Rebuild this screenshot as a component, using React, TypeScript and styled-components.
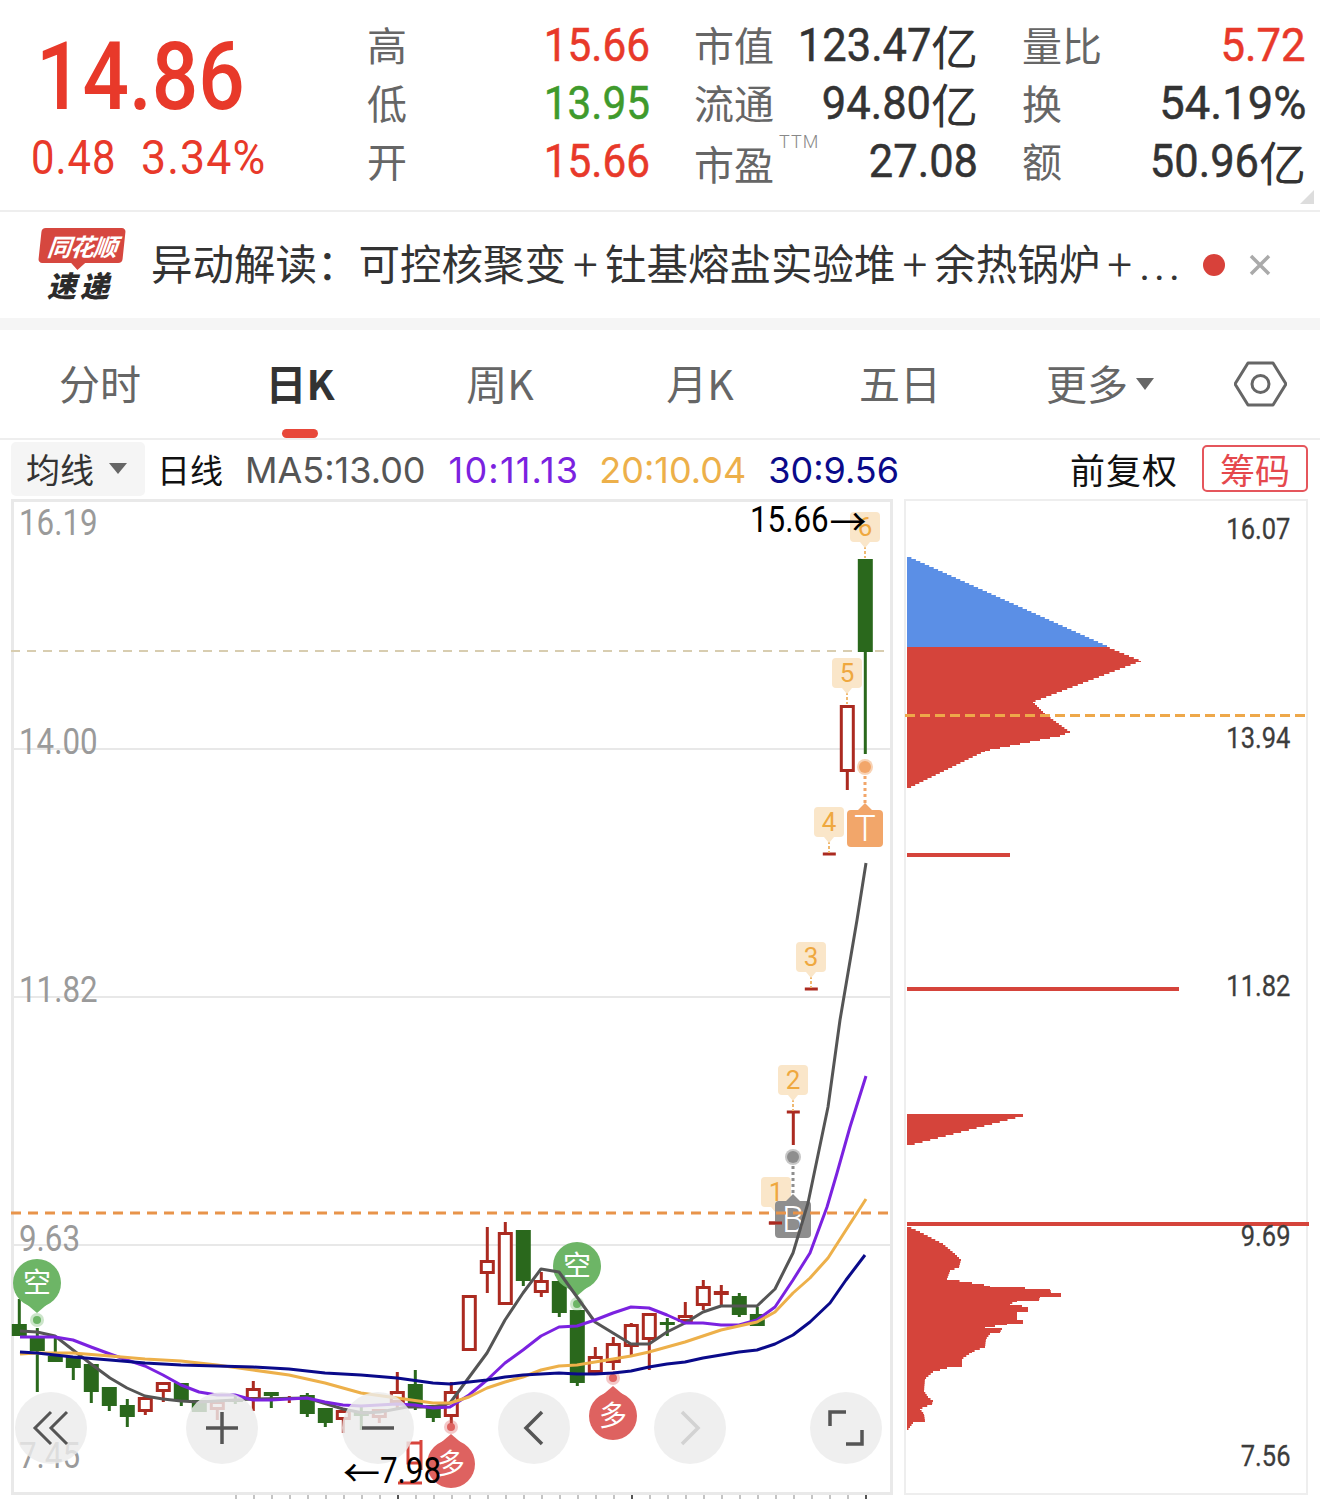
import styled, { createGlobalStyle } from "styled-components";

const NUM = `Roboto, "Noto Sans CJK SC", sans-serif`;
const CJK = `"Noto Sans CJK SC", Roboto, sans-serif`;
const MA_FONT = `Inter, Roboto, sans-serif`;

const RED = "#e8392a";
const GREEN = "#3f9a2c";
const CANDLE_RED = "#ab2a20";
const CANDLE_GREEN = "#2a681c";
const CHIP_RED = "#d5443b";

type StatItem = { label: string; value: string; scale: number; unit?: string; color?: string; sup?: string };

const stats: StatItem[] = [
  { label: "高", value: "15.66", scale: 0.9, color: RED },
  { label: "市值", value: "123.47", scale: 0.925, unit: "亿" },
  { label: "量比", value: "5.72", scale: 0.93, color: RED },
  { label: "低", value: "13.95", scale: 0.9, color: GREEN },
  { label: "流通", value: "94.80", scale: 0.925, unit: "亿" },
  { label: "换", value: "54.19%", scale: 0.965 },
  { label: "开", value: "15.66", scale: 0.9, color: RED },
  { label: "市盈", value: "27.08", scale: 0.925, sup: "TTM" },
  { label: "额", value: "50.96", scale: 0.925, unit: "亿" },
];

const tabs = ["分时", "日K", "周K", "月K", "五日"];

// hi, lo, top, bottom, up
const candles: number[][] = [
  [1299, 1336, 1324, 1336, 0],
  [1328, 1392, 1338, 1351, 0],
  [1337, 1362, 1356, 1362, 0],
  [1356, 1380, 1356, 1368, 0],
  [1364, 1403, 1364, 1392, 0],
  [1387, 1411, 1387, 1406, 0],
  [1399, 1427, 1405, 1417, 0],
  [1397, 1415, 1397, 1412, 1],
  [1382, 1402, 1382, 1392, 1],
  [1383, 1406, 1383, 1400, 0],
  [1400, 1412, 1400, 1412, 0],
  [1401, 1420, 1401, 1410, 1],
  [1395, 1404, 1399, 1402, 0],
  [1381, 1411, 1388, 1400, 1],
  [1392, 1408, 1392, 1396, 0],
  [1396, 1403, 1396, 1399, 1],
  [1393, 1417, 1395, 1414, 0],
  [1408, 1427, 1408, 1423, 0],
  [1410, 1433, 1410, 1420, 1],
  [1407, 1430, 1411, 1416, 0],
  [1409, 1423, 1409, 1418, 1],
  [1372, 1408, 1391, 1403, 1],
  [1370, 1410, 1384, 1408, 0],
  [1405, 1422, 1405, 1418, 0],
  [1382, 1427, 1391, 1417, 1],
  [1295, 1351, 1295, 1351, 1],
  [1227, 1293, 1260, 1274, 1],
  [1222, 1305, 1232, 1305, 1],
  [1230, 1286, 1230, 1281, 0],
  [1272, 1297, 1280, 1293, 1],
  [1278, 1317, 1281, 1313, 0],
  [1310, 1386, 1310, 1383, 0],
  [1347, 1373, 1356, 1373, 1],
  [1337, 1370, 1343, 1363, 1],
  [1323, 1356, 1324, 1347, 1],
  [1313, 1370, 1313, 1340, 1],
  [1318, 1336, 1322, 1325, 0],
  [1302, 1322, 1315, 1322, 1],
  [1280, 1310, 1286, 1306, 1],
  [1285, 1305, 1291, 1295, 1],
  [1293, 1317, 1296, 1315, 0],
  [1307, 1326, 1314, 1326, 0],
  [1223, 1223, 1223, 1223, 1],
  [1112, 1145, 1112, 1112, 1],
  [989, 989, 989, 989, 1],
  [854, 854, 854, 854, 1],
  [705, 790, 705, 772, 1],
  [559, 754, 559, 652, 0],
];

const ma5 =
  "20,1331 37,1332 55,1336 73,1350 91,1364 110,1378 127,1388 145,1396 163,1399 181,1401 199,1402 217,1401 253,1399 307,1398 343,1409 363,1413 380,1412 407,1407 433,1407 450,1403 487,1353 505,1320 523,1293 541,1269 559,1272 577,1297 595,1322 613,1333 631,1344 649,1344 667,1332 685,1323 703,1312 721,1306 739,1306 757,1306 775,1289 793,1253 808,1203 828,1107 840,1020 857,920 866,863";
const ma10 =
  "20,1337 37,1337 55,1337 73,1340 91,1347 110,1354 127,1360 145,1366 163,1375 181,1385 199,1392 217,1395 235,1395 253,1400 271,1400 289,1399 307,1398 325,1402 343,1405 361,1406 379,1405 397,1404 415,1405 433,1408 450,1407 469,1395 487,1380 505,1363 523,1350 541,1336 559,1327 577,1326 595,1320 613,1313 631,1307 649,1308 667,1315 685,1323 703,1323 721,1325 739,1325 757,1320 775,1307 793,1280 810,1253 827,1207 837,1173 850,1127 866,1076";
const ma20 =
  "20,1354 37,1353 73,1353 110,1356 145,1359 181,1361 217,1365 253,1370 289,1375 325,1383 361,1393 397,1398 433,1403 450,1403 469,1397 487,1388 505,1382 523,1377 541,1370 559,1366 577,1365 595,1362 613,1359 631,1356 649,1352 667,1347 685,1342 703,1336 721,1330 739,1326 757,1322 775,1312 793,1293 810,1278 828,1258 846,1230 866,1199";
const ma30 =
  "20,1352 37,1353 73,1357 110,1360 145,1363 181,1365 217,1366 253,1367 289,1369 325,1373 361,1375 397,1378 433,1383 450,1384 469,1382 487,1380 505,1377 523,1375 541,1374 559,1373 577,1374 595,1374 613,1373 631,1371 649,1367 667,1364 685,1362 703,1358 721,1355 739,1352 757,1350 775,1344 793,1335 810,1322 830,1303 846,1280 865,1255";

const grids = [749, 997, 1245];
const axis = [
  { top: -3, text: "16.19" },
  { top: 216, text: "14.00" },
  { top: 464, text: "11.82" },
  { top: 713, text: "9.63" },
  { top: 930, text: "7.45" },
];
const chipAxis = [
  { top: 7, text: "16.07" },
  { top: 216, text: "13.94" },
  { top: 464, text: "11.82" },
  { top: 714, text: "9.69" },
  { top: 934, text: "7.56" },
];

const tags = [
  { n: 1, x: 776, y: 1177 },
  { n: 2, x: 793, y: 1065 },
  { n: 3, x: 811, y: 942 },
  { n: 4, x: 829, y: 807 },
  { n: 5, x: 847, y: 658 },
  { n: 6, x: 865, y: 512 },
];

const lowerChip: [number, number][] = [
  [907, 1227], [920, 1233], [943, 1245], [955, 1255], [961, 1261], [959, 1268], [950, 1272], [947, 1280],
  [972, 1284], [990, 1287], [1025, 1289], [1050, 1290], [1051, 1293], [1061, 1295], [1061, 1297], [1040, 1298],
  [1039, 1301], [1017, 1302], [1010, 1305], [1028, 1308], [1028, 1312], [1017, 1313], [1017, 1320], [1023, 1321],
  [1023, 1324], [1007, 1325], [995, 1327], [985, 1328], [1002, 1330], [1000, 1333], [990, 1335], [986, 1340],
  [985, 1348], [972, 1353], [962, 1360], [962, 1367], [947, 1369], [933, 1373], [925, 1380], [924, 1392],
  [928, 1398], [933, 1402], [932, 1405], [920, 1410], [924, 1415], [925, 1422], [913, 1424], [907, 1432],
];

// the chip chart is drawn in thin rows, so a profile becomes a stepped path
function stairPath(points: [number, number][], left = 907) {
  let d = `M${left} ${points[0][1]}`;
  for (let i = 0; i < points.length - 1; i++) {
    const [x0, y0] = points[i];
    const [x1, y1] = points[i + 1];
    for (let y = y0; y < y1; y += 2) {
      const x = x0 + ((x1 - x0) * Math.min(y + 2 - y0, y1 - y0)) / (y1 - y0);
      d += `H${x.toFixed(1)}V${Math.min(y + 2, y1)}`;
    }
  }
  return `${d}H${left}z`;
}

const GlobalStyle = createGlobalStyle`
  html, body {
    margin: 0;
    padding: 0;
    background: #fff;
    font-family: ${CJK};
  }
`;

const Page = styled.div`
  width: 1320px;
  height: 1499px;
  overflow: hidden;
  background: #fff;
`;

const Header = styled.header`
  position: relative;
  display: flex;
  height: 210px;
  padding-top: 15px;
  box-sizing: border-box;
`;

// digits of the reference are condensed, no installed family is that narrow
const Narrow = styled.span<{ $scale?: number; $origin?: string }>`
  display: inline-block;
  white-space: nowrap;
  font-family: ${NUM};
  transform: scaleX(${(p) => p.$scale ?? 0.87});
  transform-origin: ${(p) => p.$origin ?? "left"} center;
`;

const PriceBlock = styled.div`
  width: 367px;
  flex: none;
  color: ${RED};
`;

const BigPrice = styled.div`
  margin: 6px 0 0 36px;
  font-size: 94px;
  line-height: 94px;
  font-weight: 500;
`;

const ChangeRow = styled.div`
  display: flex;
  gap: 12px;
  margin: 8px 0 0 31px;
  font-size: 48px;
  line-height: 52px;
  font-weight: 400;
  letter-spacing: 1.2px;
`;

const StatGrid = styled.div`
  display: grid;
  grid-template-columns: 283px 284px 284px;
  grid-auto-rows: 58px;
  column-gap: 44px;
`;

const Stat = styled.div`
  display: flex;
  align-items: center;
  justify-content: space-between;
  white-space: nowrap;
`;

const StatLabel = styled.span<{ $low?: boolean }>`
  position: relative;
  margin-top: ${(p) => (p.$low ? 6 : 0)}px;
  font-size: 40px;
  color: #666;
`;

const Sup = styled.sup`
  position: absolute;
  left: 85px;
  top: -2px;
  font-size: 18px;
  line-height: 20px;
  letter-spacing: 1px;
  color: #888;
  font-family: ${NUM};
  font-weight: 300;
`;

const StatValue = styled.span<{ $color?: string }>`
  display: flex;
  align-items: center;
  margin-top: 2px;
  font-size: 47px;
  line-height: 52px;
  font-weight: 400;
  color: ${(p) => p.$color || "#333"};
  -webkit-text-stroke: 0.5px currentColor;
`;

const Unit = styled.span`
  font-family: ${CJK};
  font-size: 47px;
  line-height: 52px;
  -webkit-text-stroke: 0;
`;

const Corner = styled.i`
  position: absolute;
  right: 6px;
  bottom: 6px;
  border-style: solid;
  border-width: 0 0 14px 14px;
  border-color: transparent transparent #ddd transparent;
`;

const Notice = styled.section`
  display: flex;
  align-items: center;
  height: 108px;
  box-sizing: border-box;
  border-top: 2px solid #eee;
  padding: 0 49px 0 38px;
`;

const Logo = styled.div`
  width: 87px;
  flex: none;
  margin-right: 26px;
  margin-top: -2px;
  text-align: center;
`;

const LogoBadge = styled.div`
  position: relative;
  height: 35px;
  width: 84px;
  margin-left: 2px;
  background: #d6473f;
  border-radius: 4px;
  transform: skewX(-6deg);
  color: #fff;
  font-size: 24px;
  line-height: 35px;
  font-weight: 700;
  font-style: italic;
  letter-spacing: -1px;
  white-space: nowrap;

  &::after {
    content: "";
    position: absolute;
    left: 33px;
    bottom: -7px;
    border-style: solid;
    border-width: 7px 7px 0 7px;
    border-color: #d6473f transparent transparent transparent;
  }
`;

const LogoSub = styled.div`
  margin: 5px 0 0 -3px;
  font-size: 29px;
  line-height: 32px;
  font-weight: 900;
  font-style: italic;
  color: #2b2b2b;
  letter-spacing: 4px;
  white-space: nowrap;
`;

const NoticeText = styled.div`
  flex: 1;
  min-width: 0;
  font-size: 41.5px;
  line-height: 56px;
  margin-top: -2px;
  color: #333;
  white-space: nowrap;
`;

const Plus = styled.span`
  font-family: ${NUM};
  font-size: 44px;
  font-weight: 300;
  margin: 0 7px;
`;

const Dots = styled.span`
  font-family: ${NUM};
  letter-spacing: 4px;
`;

const RedDot = styled.i`
  flex: none;
  width: 22px;
  height: 22px;
  border-radius: 50%;
  background: #d8413a;
  margin-left: 28px;
`;

const CloseIcon = styled.svg`
  flex: none;
  width: 22px;
  height: 22px;
  margin-left: 24px;
`;

const Band = styled.div`
  height: 12px;
  background: #f5f5f5;
`;

const TabBar = styled.nav`
  display: flex;
  height: 110px;
  box-sizing: border-box;
  border-bottom: 2px solid #eee;
`;

const Tab = styled.div<{ $active?: boolean }>`
  position: relative;
  flex: none;
  width: 200px;
  padding-bottom: 4px;
  box-sizing: border-box;
  display: flex;
  align-items: center;
  justify-content: center;
  font-family: "Noto Sans CJK SC", sans-serif;
  font-size: 41px;
  font-weight: ${(p) => (p.$active ? 700 : 400)};
  color: ${(p) => (p.$active ? "#333" : "#666")};

  &::after {
    content: "";
    display: ${(p) => (p.$active ? "block" : "none")};
    position: absolute;
    left: 82px;
    bottom: 0;
    width: 36px;
    height: 9px;
    border-radius: 5px;
    background: #e8483a;
  }
`;

const Caret = styled.i`
  margin: 4px 0 0 8px;
  border-style: solid;
  border-width: 12px 9px 0 9px;
  border-color: #666 transparent transparent transparent;
`;

const GearCell = styled.div`
  flex: 1;
  display: flex;
  align-items: center;
  justify-content: center;
`;

const GearIcon = styled.svg`
  width: 53px;
  height: 46px;
`;

const MaRow = styled.div`
  display: flex;
  align-items: center;
  height: 59px;
  padding: 0 12px 2px 11px;
  box-sizing: border-box;
  font-family: ${MA_FONT};
  font-size: 36px;
`;

const MaSelect = styled.div`
  display: flex;
  align-items: center;
  width: 134px;
  height: 54px;
  padding-left: 15px;
  box-sizing: border-box;
  background: #f5f5f5;
  border-radius: 5px;
  font-family: ${CJK};
  color: #333;
  font-size: 34px;
`;

const SelectCaret = styled.i`
  margin-left: 15px;
  border-style: solid;
  border-width: 11px 9px 0 9px;
  border-color: #666 transparent transparent transparent;
`;

const MaTitle = styled.span`
  margin-left: 12px;
  font-family: ${CJK};
  font-size: 33px;
  color: #111;
`;

const MaValue = styled.span<{ $color: string; $gap: number; $track?: number }>`
  margin-left: ${(p) => p.$gap}px;
  margin-top: 2px;
  letter-spacing: ${(p) => p.$track ?? 0}px;
  color: ${(p) => p.$color};
`;

const Adjust = styled.span`
  margin-left: auto;
  font-family: ${CJK};
  font-size: 35px;
  letter-spacing: 1px;
  color: #111;
`;

const ChipButton = styled.span`
  margin-left: 24px;
  width: 106px;
  height: 47px;
  box-sizing: border-box;
  display: flex;
  align-items: center;
  justify-content: center;
  border: 2px solid #e5565c;
  border-radius: 5px;
  color: #e5484d;
  font-family: ${CJK};
  font-size: 35px;
`;

const ChartRow = styled.div`
  display: flex;
  gap: 11px;
  padding-left: 11px;
  height: 996px;
`;

const KlinePanel = styled.div`
  position: relative;
  width: 882px;
  height: 996px;
  box-sizing: border-box;
  border: 3px solid #e9e9e9;
`;

const ChipPanel = styled.div`
  position: relative;
  width: 404px;
  height: 996px;
  box-sizing: border-box;
  border: 2px solid #eee;
`;

const PlotSvg = styled.svg`
  display: block;
  overflow: visible;
`;

const AxisLabel = styled.span<{ $top: number }>`
  position: absolute;
  left: 5px;
  top: ${(p) => p.$top}px;
  font-size: 36px;
  line-height: 40px;
  color: #9a9a9a;
`;

const ChipLabel = styled.span<{ $top: number }>`
  position: absolute;
  right: 16px;
  top: ${(p) => p.$top}px;
  font-size: 30px;
  line-height: 36px;
  color: #3c3c3c;
  -webkit-text-stroke: 0.3px currentColor;
`;

const ExtremeLabel = styled.span<{ $left: number; $top: number }>`
  position: absolute;
  z-index: 3;
  left: ${(p) => p.$left}px;
  top: ${(p) => p.$top}px;
  display: flex;
  align-items: center;
  font-size: 36px;
  line-height: 40px;
  color: #000;
  white-space: nowrap;
`;

const Arrow = styled.span<{ $after?: boolean }>`
  font-family: ${CJK};
  font-size: 37px;
  margin-left: ${(p) => (p.$after ? -11 : 0)}px;
`;

const ButtonBar = styled.div`
  position: absolute;
  left: 1px;
  top: 890px;
  display: flex;
  gap: 84px;
`;

const RoundButton = styled.button<{ $wide?: boolean }>`
  width: 72px;
  height: 72px;
  padding: 0;
  margin-right: ${(p) => (p.$wide ? 15 : 0)}px;
  border: 0;
  border-radius: 50%;
  background: rgba(236, 236, 236, 0.82);
  display: flex;
  align-items: center;
  justify-content: center;
`;

const ButtonIcon = styled.svg`
  width: 40px;
  height: 40px;
`;

const TagText = styled.text`
  font-family: ${NUM};
  font-size: 26px;
  fill: #efa83f;
  text-anchor: middle;
`;

const BadgeText = styled.text`
  font-family: ${NUM};
  font-size: 36px;
  font-weight: 300;
  fill: #fff;
  text-anchor: middle;
`;

const SignalText = styled.text`
  font-family: ${CJK};
  font-size: 28px;
  fill: #fff;
  text-anchor: middle;
`;

const TickSvg = styled.svg`
  display: block;
  width: 1320px;
  height: 4px;
`;

function Candles() {
  return (
    <g>
      {candles.map(([hi, lo, top, bottom, up], i) => {
        const x = 19.3 + 18 * i;
        const color = up ? CANDLE_RED : CANDLE_GREEN;
        if (top === bottom) {
          return (
            <g key={i}>
              <rect x={x - 6.5} y={top - 1.5} width={13} height={3} fill={color} />
              {lo > hi && <rect x={x - 1.5} y={hi} width={3} height={lo - hi} fill={color} />}
            </g>
          );
        }
        return (
          <g key={i}>
            <rect x={x - 1.5} y={hi} width={3} height={lo - hi} fill={color} />
            {up ? (
              <rect x={x - 6} y={top + 1.5} width={12} height={bottom - top - 3} fill="#fff" stroke={color} strokeWidth={3} />
            ) : (
              <rect x={x - 7.5} y={top} width={15} height={bottom - top} fill={color} />
            )}
          </g>
        );
      })}
    </g>
  );
}

function Tag({ n, x, y }: { n: number; x: number; y: number }) {
  return (
    <g>
      <line x1={x} y1={y + 34} x2={x} y2={y + 46} stroke="#efb870" strokeWidth={2} strokeDasharray="3 2" />
      <path d={`M${x - 11} ${y}h22a4 4 0 0 1 4 4v22a4 4 0 0 1 -4 4h-6l-5 6l-5 -6h-6a4 4 0 0 1 -4 -4v-22a4 4 0 0 1 4 -4z`} fill="#fae6c9" />
      <TagText x={x} y={y + 24}>{n}</TagText>
    </g>
  );
}

function TradeBadge({ x, dotY, y, label, color }: { x: number; dotY: number; y: number; label: string; color: string }) {
  return (
    <g>
      <circle cx={x} cy={dotY} r={8} fill={color} opacity={0.5} />
      <circle cx={x} cy={dotY} r={6} fill={color} />
      <line x1={x} y1={dotY + 9} x2={x} y2={y - 7} stroke={color} strokeWidth={3} strokeDasharray="3 3" />
      <path d={`M${x - 14} ${y}H${x - 7}L${x} ${y - 7}L${x + 7} ${y}H${x + 14}a4 4 0 0 1 4 4v29a4 4 0 0 1 -4 4h-28a4 4 0 0 1 -4 -4v-29a4 4 0 0 1 4 -4z`} fill={color} />
      <BadgeText x={x} y={y + 31}>{label}</BadgeText>
    </g>
  );
}

function Signal({ x, y, dotY, label, color }: { x: number; y: number; dotY: number; label: string; color: string }) {
  const down = dotY > y;
  const edge = down ? y + 18 : y - 18;
  const tip = down ? y + 30 : y - 30;
  return (
    <g>
      <circle cx={x} cy={dotY} r={7} fill={color} opacity={0.35} />
      <circle cx={x} cy={dotY} r={4} fill={color} />
      <path d={`M${x - 14} ${edge}L${x} ${tip}L${x + 14} ${edge}z`} fill={color} />
      <circle cx={x} cy={y} r={24} fill={color} />
      <SignalText x={x} y={y + 10}>{label}</SignalText>
    </g>
  );
}

function KlineChart() {
  return (
    <PlotSvg width={876} height={990} viewBox="14 502 876 990">
      {grids.map((y) => (
        <line key={y} x1={14} x2={890} y1={y} y2={y} stroke="#e8e8e8" strokeWidth={2} />
      ))}
      <line x1={11} x2={890} y1={651} y2={651} stroke="#d8cdb0" strokeWidth={2} strokeDasharray="9 7" />
      <Candles />
      <Signal x={37} y={1283} dotY={1320} label="空" color="#6db566" />
      <Signal x={577} y={1266} dotY={1304} label="空" color="#6db566" />
      <Signal x={613} y={1416} dotY={1378} label="多" color="#de6260" />
      <path d="M408 1443h13v20h-13zM421 1440v30M398 1483h24" fill="none" stroke="#d8443c" strokeWidth={3} />
      <Signal x={451} y={1464} dotY={1427} label="多" color="#de6260" />
      {tags.map((t) => (
        <Tag key={t.n} {...t} />
      ))}
      <TradeBadge x={865} dotY={767} y={810} label="T" color="#f2a66a" />
      <TradeBadge x={793} dotY={1157} y={1201} label="B" color="#8e8e8e" />
      <rect x={769} y={1221.5} width={13} height={3} fill={CANDLE_RED} />
      <line x1={11} x2={890} y1={1213} y2={1213} stroke="#e8944a" strokeWidth={3} strokeDasharray="10 7" />
      <polyline points={ma5} fill="none" stroke="#555" strokeWidth={3} strokeLinejoin="round" />
      <polyline points={ma10} fill="none" stroke="#7b22e0" strokeWidth={3} strokeLinejoin="round" />
      <polyline points={ma20} fill="none" stroke="#edb04a" strokeWidth={3} strokeLinejoin="round" />
      <polyline points={ma30} fill="none" stroke="#0a0a8a" strokeWidth={3} strokeLinejoin="round" />
    </PlotSvg>
  );
}

function ChipChart() {
  return (
    <PlotSvg width={400} height={992} viewBox="906 501 400 992">
      <path d={stairPath([[907, 557], [1107, 647]])} fill="#5b8fe6" />
      <path
        d={stairPath([[1105, 647], [1141, 662], [1033, 703], [1045, 715], [1070, 733], [1060, 737], [985, 752], [907, 790]])}
        fill={CHIP_RED}
      />
      <line x1={905} x2={1308} y1={715.5} y2={715.5} stroke="#eea84a" strokeWidth={3} strokeDasharray="10 5" />
      <rect x={907} y={853} width={103} height={4} fill={CHIP_RED} />
      <rect x={907} y={987} width={272} height={4} fill={CHIP_RED} />
      <path d={stairPath([[1023, 1114], [1023, 1117], [907, 1147]])} fill={CHIP_RED} />
      <rect x={907} y={1222} width={402} height={4} fill={CHIP_RED} />
      <path d={stairPath(lowerChip)} fill={CHIP_RED} />
    </PlotSvg>
  );
}

function AxisTicks() {
  const ticks = Array.from({ length: 36 }, (_, i) => 235 + 18 * i);
  return (
    <TickSvg viewBox="0 1495 1320 4">
      {ticks.map((x) => (
        <rect key={x} x={x} y={1495} width={2} height={4} fill={x === 397 || x === 631 || x === 865 ? "#555" : "#c4c4c4"} />
      ))}
    </TickSvg>
  );
}

export default function App() {
  return (
    <Page>
      <GlobalStyle />
      <Header>
        <PriceBlock>
          <BigPrice>
            <Narrow>14.86</Narrow>
          </BigPrice>
          <ChangeRow>
            <Narrow>0.48</Narrow>
            <Narrow $scale={0.93}>3.34%</Narrow>
          </ChangeRow>
        </PriceBlock>
        <StatGrid>
          {stats.map((s) => (
            <Stat key={s.label}>
              <StatLabel $low={!!s.sup}>
                {s.label}
                {s.sup && <Sup>{s.sup}</Sup>}
              </StatLabel>
              <StatValue $color={s.color}>
                <Narrow $origin="right" $scale={s.scale}>{s.value}</Narrow>
                {s.unit && <Unit>{s.unit}</Unit>}
              </StatValue>
            </Stat>
          ))}
        </StatGrid>
        <Corner />
      </Header>

      <Notice>
        <Logo>
          <LogoBadge>同花顺</LogoBadge>
          <LogoSub>速递</LogoSub>
        </Logo>
        <NoticeText>
          异动解读：可控核聚变<Plus>+</Plus>钍基熔盐实验堆<Plus>+</Plus>余热锅炉<Plus>+</Plus>
          <Dots>...</Dots>
        </NoticeText>
        <RedDot />
        <CloseIcon viewBox="0 0 22 22">
          <path d="M2 2L20 20M20 2L2 20" stroke="#aaa" strokeWidth={3.5} fill="none" />
        </CloseIcon>
      </Notice>

      <Band />

      <TabBar>
        {tabs.map((t) => (
          <Tab key={t} $active={t === "日K"}>
            {t}
          </Tab>
        ))}
        <Tab>
          更多
          <Caret />
        </Tab>
        <GearCell>
          <GearIcon viewBox="0 0 53 46">
            <path d="M14 2h25l13 21l-13 21h-25l-13 -21z" fill="none" stroke="#666" strokeWidth={3} strokeLinejoin="round" />
            <circle cx={26.5} cy={23} r={8.5} fill="none" stroke="#666" strokeWidth={3} />
          </GearIcon>
        </GearCell>
      </TabBar>

      <MaRow>
        <MaSelect>
          均线
          <SelectCaret />
        </MaSelect>
        <MaTitle>日线</MaTitle>
        <MaValue $color="#555" $gap={22}>MA5:13.00</MaValue>
        <MaValue $color="#7b22e0" $gap={23} $track={1.2}>10:11.13</MaValue>
        <MaValue $color="#edb04a" $gap={20}>20:10.04</MaValue>
        <MaValue $color="#0a0a8a" $gap={22}>30:9.56</MaValue>
        <Adjust>前复权</Adjust>
        <ChipButton>筹码</ChipButton>
      </MaRow>

      <ChartRow>
        <KlinePanel>
          <KlineChart />
          {axis.map((a) => (
            <AxisLabel key={a.text} $top={a.top}>
              <Narrow>{a.text}</Narrow>
            </AxisLabel>
          ))}
          <ButtonBar>
            <RoundButton $wide>
              <ButtonIcon viewBox="0 0 40 40">
                <path d="M20 4L4 20L20 36M36 4L20 20L36 36" fill="none" stroke="#555" strokeWidth={3} />
              </ButtonIcon>
            </RoundButton>
            <RoundButton>
              <ButtonIcon viewBox="0 0 40 40">
                <path d="M20 4V36M4 20H36" fill="none" stroke="#555" strokeWidth={3.5} />
              </ButtonIcon>
            </RoundButton>
            <RoundButton>
              <ButtonIcon viewBox="0 0 40 40">
                <path d="M4 20H36" fill="none" stroke="#555" strokeWidth={3.5} />
              </ButtonIcon>
            </RoundButton>
            <RoundButton>
              <ButtonIcon viewBox="0 0 40 40">
                <path d="M28 4L12 20L28 36" fill="none" stroke="#555" strokeWidth={3.5} />
              </ButtonIcon>
            </RoundButton>
            <RoundButton>
              <ButtonIcon viewBox="0 0 40 40">
                <path d="M12 4L28 20L12 36" fill="none" stroke="#d2d2d2" strokeWidth={3.5} />
              </ButtonIcon>
            </RoundButton>
            <RoundButton>
              <ButtonIcon viewBox="0 0 40 40">
                <path d="M4 18V4H20M36 22V36H20" fill="none" stroke="#555" strokeWidth={3.5} />
              </ButtonIcon>
            </RoundButton>
          </ButtonBar>
          <ExtremeLabel $left={736} $top={-2}>
            <Narrow>15.66</Narrow>
            <Arrow $after>→</Arrow>
          </ExtremeLabel>
          <ExtremeLabel $left={329} $top={949}>
            <Arrow>←</Arrow>
            <Narrow>7.98</Narrow>
          </ExtremeLabel>
        </KlinePanel>
        <ChipPanel>
          <ChipChart />
          {chipAxis.map((a) => (
            <ChipLabel key={a.text} $top={a.top}>
              <Narrow $origin="right" $scale={0.85}>{a.text}</Narrow>
            </ChipLabel>
          ))}
        </ChipPanel>
      </ChartRow>
      <AxisTicks />
    </Page>
  );
}
